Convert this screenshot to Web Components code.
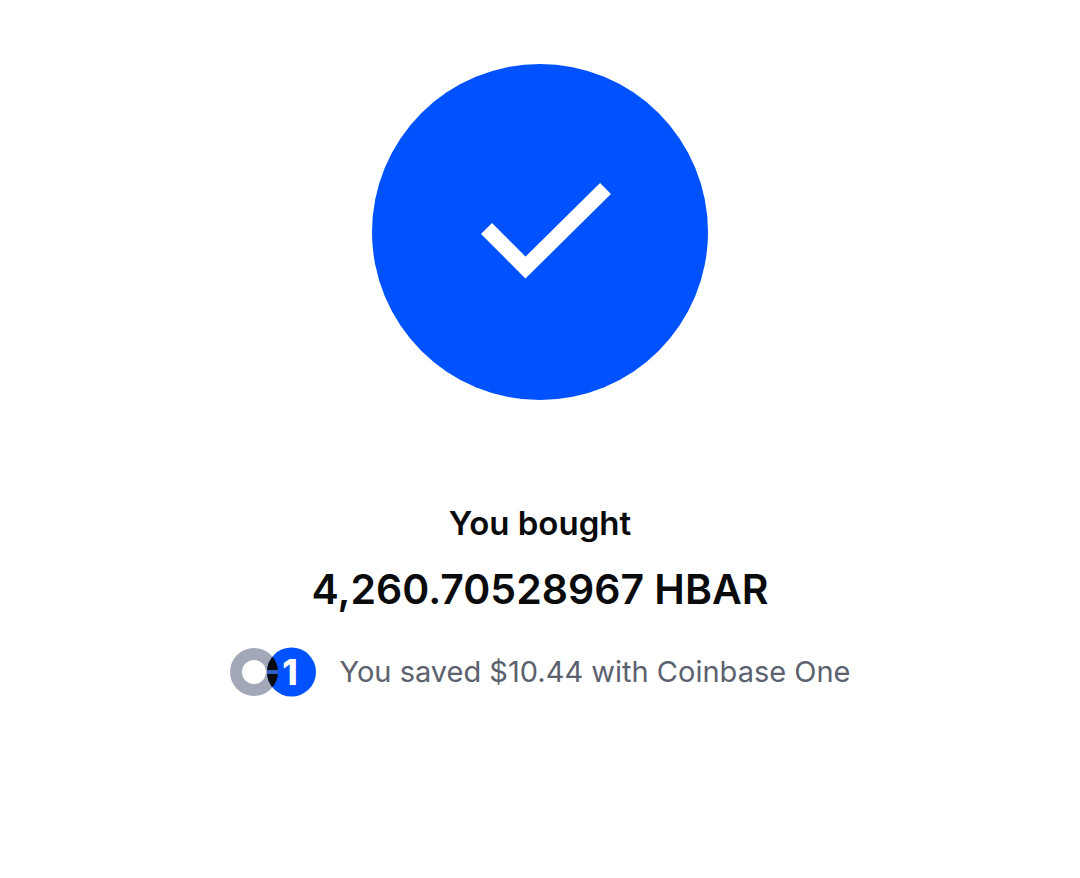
<!DOCTYPE html>
<html lang="en">
<head>
<meta charset="utf-8">
<meta name="viewport" content="width=device-width, initial-scale=1">
<title>Order complete</title>
<style>
    body {
        margin: 0;
        background: #fff;
        color: #0a0b0d;
        font-family: Inter, "Liberation Sans", sans-serif;
    }
</style>
</head>
<body>
<order-success>
    <success-badge slot="badge"></success-badge>
    <span slot="label">You bought</span>
    <span slot="amount">4,260.70528967 HBAR</span>
    <savings-note slot="note">You saved $10.44 with Coinbase One</savings-note>
</order-success>

<script>
class SuccessBadge extends HTMLElement {
    constructor(){
        super();
        this.shadow = this.attachShadow({mode: "open"});
        this.shadow.innerHTML =
        `
        <style>
            :host{
                display: block;
                width: 336px;
                max-width: 100%;
            }

            svg {
                display: block;
                width: 100%;
                height: auto;
            }
        </style>
        <svg viewBox="0 0 336 336" role="img" aria-label="Success">
            <circle cx="168" cy="168" r="168" fill="#0052ff"/>
            <path d="M114.500 164.500L153.500 203.500L233.500 124.500" fill="none" stroke="#fff" stroke-width="15.500"/>
        </svg>
        `;
    }
}

class OneLogo extends HTMLElement {
    constructor(){
        super();
        this.shadow = this.attachShadow({mode: "open"});
        this.shadow.innerHTML =
        `
        <style>
            :host{
                display: block;
                flex: none;
                width: 86px;
            }

            svg {
                display: block;
                width: 100%;
                height: auto;
            }

            text {
                font: 800 35px Inter, "Liberation Sans", sans-serif;
            }
        </style>
        <svg viewBox="0 0 86 50" role="img" aria-label="Coinbase One">
            <defs>
                <clipPath id="ring"><circle cx="24" cy="25" r="24"/></clipPath>
            </defs>
            <circle cx="24" cy="25" r="24" fill="#a2a8b8"/>
            <circle cx="61.500" cy="25" r="24.500" fill="#0052ff"/>
            <circle cx="61.500" cy="25" r="24.500" fill="#0a0b0d" clip-path="url(#ring)"/>
            <path d="M37 23H48V27H37Z" fill="#2f62c4"/>
            <circle cx="24" cy="25" r="12" fill="#fff"/>
            <text x="60" y="38" text-anchor="middle" fill="#fff">1</text>
        </svg>
        `;
    }
}

class SavingsNote extends HTMLElement {
    constructor(){
        super();
        this.shadow = this.attachShadow({mode: "open"});
        this.shadow.innerHTML =
        `
        <style>
            :host{
                display: flex;
                align-items: center;
                justify-content: center;
                gap: 24px;
                color: #5b616e;
                font-size: 29px;
                line-height: 50px;
            }

            p {
                margin: 0;
            }
        </style>
        <one-logo></one-logo>
        <p><slot></slot></p>
        `;
    }
}

class OrderSuccess extends HTMLElement {
    constructor(){
        super();
        this.shadow = this.attachShadow({mode: "open"});
        this.shadow.innerHTML =
        `
        <style>
            :host{
                display: block;
            }

            main {
                display: flex;
                flex-direction: column;
                align-items: center;
                padding: 64px 24px;
                text-align: center;
            }

            .label {
                margin: 99px 0 0;
                font-size: 33px;
                font-weight: 600;
                line-height: 48px;
            }

            h1 {
                margin: 12px 0 0;
                font-size: 41px;
                font-weight: 600;
                line-height: 60px;
            }

            .note {
                margin-top: 28px;
            }
        </style>
        <main>
            <slot name="badge"></slot>
            <p class="label"><slot name="label"></slot></p>
            <h1><slot name="amount"></slot></h1>
            <div class="note"><slot name="note"></slot></div>
        </main>
        `;
    }
}

customElements.define("success-badge", SuccessBadge);
customElements.define("one-logo", OneLogo);
customElements.define("savings-note", SavingsNote);
customElements.define("order-success", OrderSuccess);
</script>
</body>
</html>
